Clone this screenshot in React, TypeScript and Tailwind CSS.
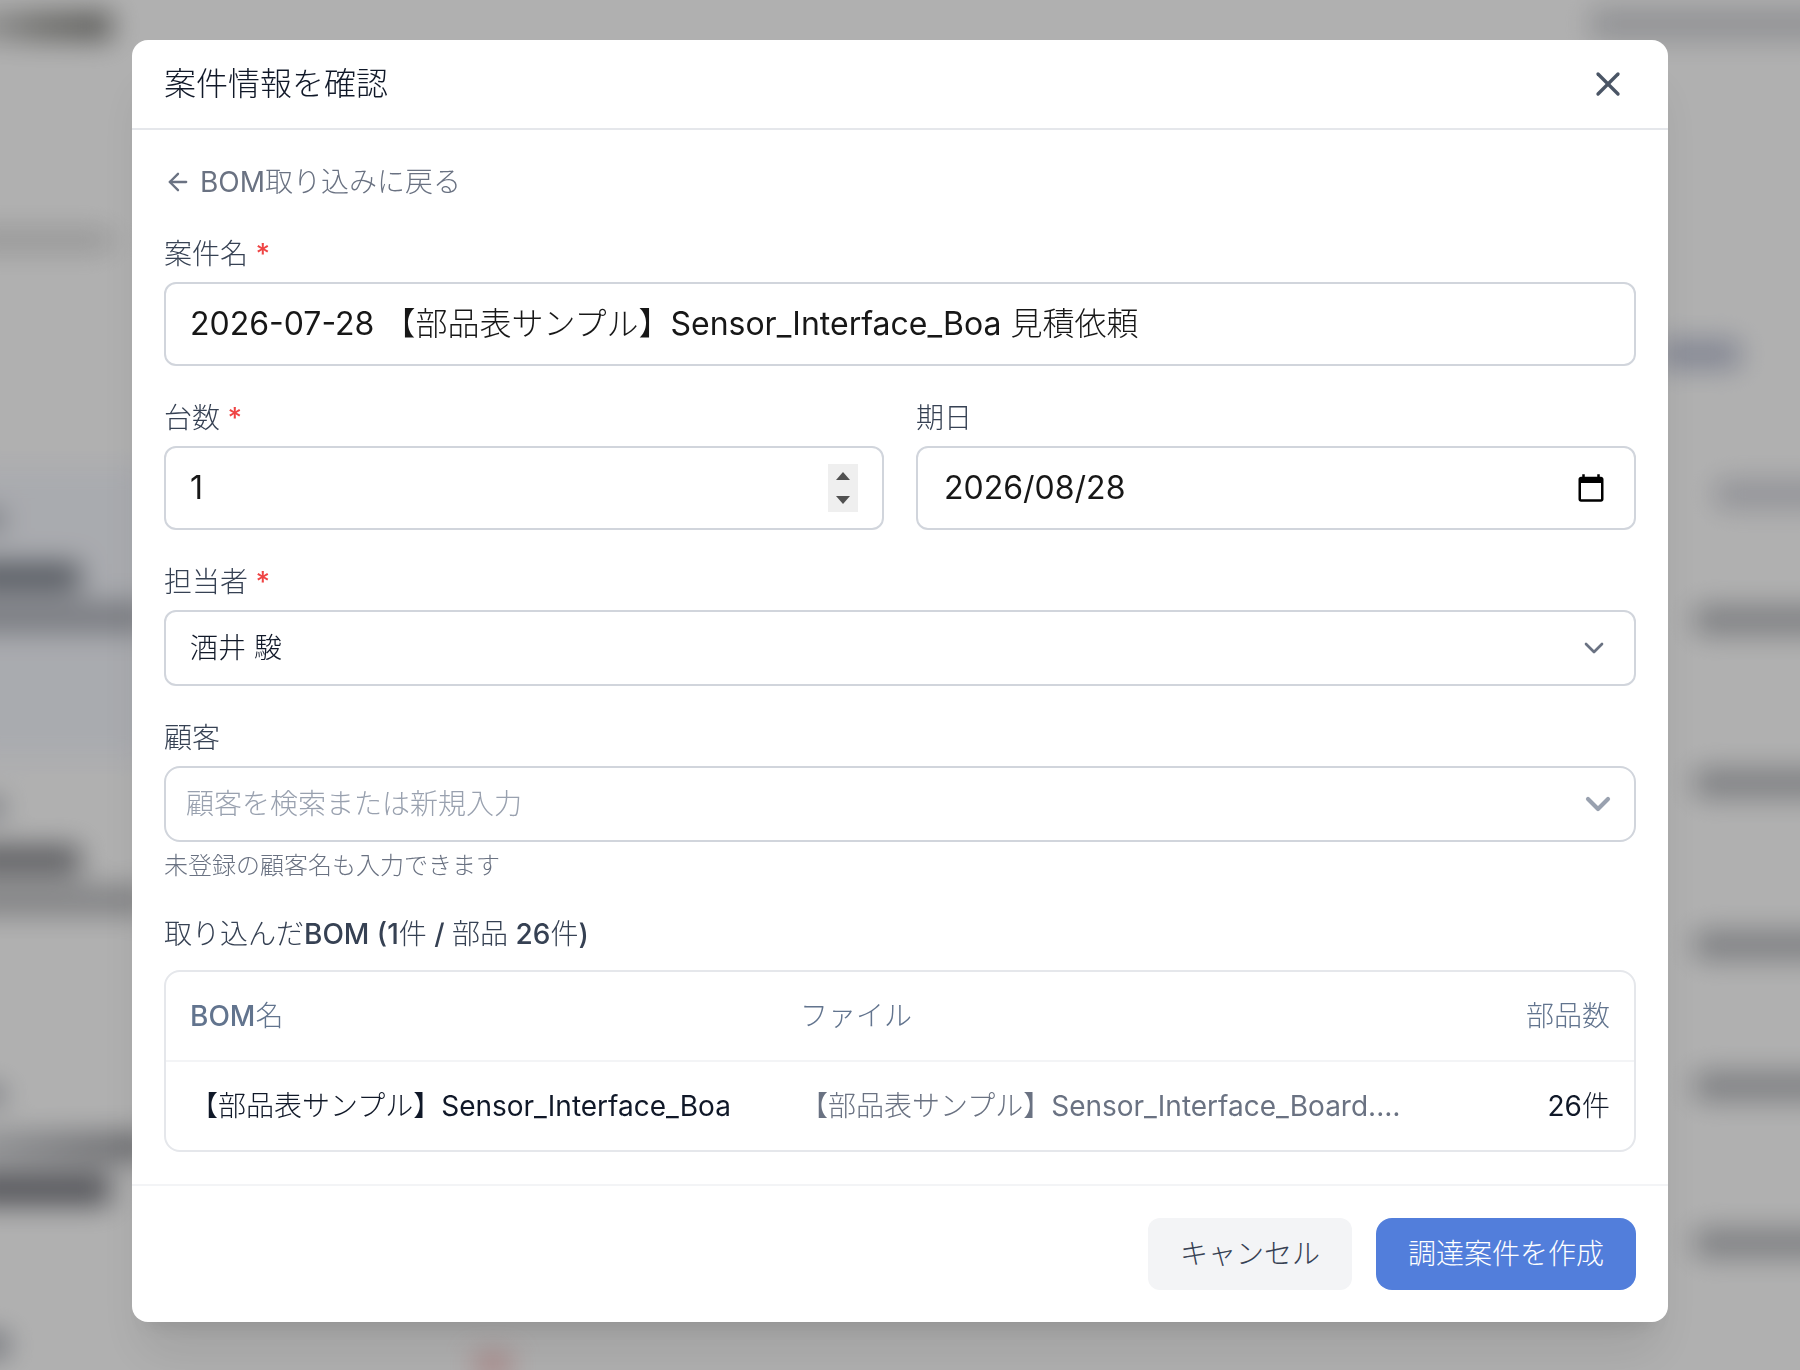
import { useState, type ReactNode } from "react";
import { ArrowLeft, ChevronDown, X } from "lucide-react";

const boms = [
  {
    name: "【部品表サンプル】Sensor_Interface_Boa",
    file: "【部品表サンプル】Sensor_Interface_Board.…",
    parts: 26
  }
];

type FieldLabelProps = {
  htmlFor: string;
  required?: boolean;
  children: ReactNode;
};

function FieldLabel({ htmlFor, required, children }: FieldLabelProps) {
  return (
    <label
      htmlFor={htmlFor}
      className="mb-2 block text-[28px] leading-10 font-medium text-gray-700"
    >
      {children}
      {required && <span className="text-[#ef4444]"> *</span>}
    </label>
  );
}

function CalendarIcon() {
  return (
    <svg width="30" height="30" viewBox="0 0 24 24" fill="black" aria-hidden="true">
      <path d="M20 3h-1V1h-2v2H7V1H5v2H4c-1.1 0-2 .9-2 2v16c0 1.1.9 2 2 2h16c1.1 0 2-.9 2-2V5c0-1.1-.9-2-2-2zm0 18H4V8h16v13z" />
    </svg>
  );
}

// Project list that stays behind the dialog, wider than the window so its blur has no edge
function PageBehind() {
  return (
    <div aria-hidden="true" className="h-screen overflow-hidden bg-[#fdfdfd]">
      <div className="-mx-8 flex h-full justify-between blur-[14px]">
        <div className="w-[182px] shrink-0">
          <div className="h-[465px] pt-3">
            <div className="h-7 w-[144px] bg-gradient-to-r from-[#e0e0e0] via-[#9a9a96] to-[#7c7c78]" />
            <div className="mt-[190px] h-5 w-[144px] bg-[#d2d2d2]" />
          </div>
          <div className="h-[295px] bg-[#f3f5fb] pt-[47px]">
            <div className="h-4 w-9 bg-[#9ca0aa]" />
            <div className="mt-[35px] h-7 w-28 bg-[#767c86]" />
            <div className="mt-3 h-7 bg-[#a8abb3]" />
          </div>
          <div className="h-[295px] pt-10">
            <div className="h-4 w-9 bg-[#9ca0aa]" />
            <div className="mt-[30px] h-7 w-28 bg-[#808186]" />
            <div className="mt-3 h-7 bg-[#b5b6b9]" />
          </div>
          <div className="pt-8">
            <div className="h-4 w-9 bg-[#9ca0aa]" />
            <div className="mt-[30px] h-7 bg-gradient-to-r from-[#d0d2d6] to-[#8c8d92]" />
            <div className="mt-3 h-8 w-[142px] bg-[#75767d]" />
            <div className="mt-[128px] h-6 w-10 bg-[#9ca0aa]" />
          </div>
        </div>
        <div className="flex flex-1 flex-col justify-end pl-[325px]">
          <div className="h-3 w-9 bg-[#f08c8c]" />
        </div>
        <div className="w-[242px] shrink-0">
          <div className="pt-2">
            <div className="h-8 bg-[#d0d1d5]" />
          </div>
          <div className="mt-[300px] ml-[70px] h-7 w-[80px] bg-[#b8bdd0]" />
          <div className="mt-[112px] ml-[125px] h-7 bg-[#d0d1d8]" />
          <div className="mt-[98px] ml-[105px] h-7 bg-[#b2b4b8]" />
          <div className="mt-[135px] ml-[105px] h-7 bg-[#b2b4b8]" />
          <div className="mt-[134px] ml-[105px] h-7 bg-[#b2b4b8]" />
          <div className="mt-[113px] ml-[105px] h-7 bg-[#b2b4b8]" />
          <div className="mt-[129px] ml-[105px] h-7 bg-[#b2b4b8]" />
        </div>
      </div>
    </div>
  );
}

export default function App() {
  const [name, setName] = useState(
    "2026-07-28 【部品表サンプル】Sensor_Interface_Boa 見積依頼"
  );
  const [quantity, setQuantity] = useState(1);
  const [dueDate, setDueDate] = useState("2026/08/28");
  const [customer, setCustomer] = useState("");

  const totalParts = boms.reduce((sum, bom) => sum + bom.parts, 0);

  return (
    <div className="font-['Inter','Noto_Sans_CJK_JP_Light','Noto_Sans_CJK_JP',sans-serif]">
      <PageBehind />

      <div className="fixed inset-0 flex items-start justify-center overflow-hidden bg-black/30 py-10">
        <div
          role="dialog"
          aria-modal="true"
          aria-labelledby="dialog-title"
          className="w-full max-w-[1536px] rounded-2xl bg-white shadow-[0_40px_50px_-10px_rgba(0,0,0,0.1),0_16px_20px_-12px_rgba(0,0,0,0.1)]"
        >
          <div className="flex items-center justify-between border-b-2 border-gray-200 px-8 py-4">
            <h2 id="dialog-title" className="text-[32px] leading-12 font-medium text-gray-900">
              案件情報を確認
            </h2>
            <button type="button" aria-label="閉じる" className="p-2 text-gray-600">
              <X size={40} />
            </button>
          </div>

          <form>
            <div className="space-y-8 p-8">
              <button
                type="button"
                className="flex items-center gap-2 text-[28px] leading-10 text-gray-500"
              >
                <ArrowLeft size={28} />
                BOM取り込みに戻る
              </button>

              <div>
                <FieldLabel htmlFor="name" required>
                  案件名
                </FieldLabel>
                <input
                  id="name"
                  type="text"
                  value={name}
                  onChange={(event) => setName(event.target.value)}
                  className="block w-full rounded-xl border-2 border-gray-300 px-6 py-4 text-[32px] leading-12 text-neutral-900 outline-none"
                />
              </div>

              <div className="grid grid-cols-2 gap-8">
                <div>
                  <FieldLabel htmlFor="quantity" required>
                    台数
                  </FieldLabel>
                  <div className="flex items-center rounded-xl border-2 border-gray-300 px-6 py-4">
                    <input
                      id="quantity"
                      type="number"
                      min={1}
                      value={quantity}
                      onChange={(event) => setQuantity(Number(event.target.value))}
                      className="h-12 min-w-0 flex-1 [appearance:textfield] text-[32px] leading-12 text-neutral-900 outline-none [&::-webkit-inner-spin-button]:appearance-none"
                    />
                    <div className="flex h-12 w-[30px] flex-col bg-[#efefef]">
                      <button
                        type="button"
                        aria-label="増やす"
                        onClick={() => setQuantity(quantity + 1)}
                        className="flex flex-1 items-center justify-center"
                      >
                        <svg width="14" height="8" viewBox="0 0 14 8" fill="#505050">
                          <path d="M7 0l7 8H0z" />
                        </svg>
                      </button>
                      <button
                        type="button"
                        aria-label="減らす"
                        onClick={() => setQuantity(Math.max(1, quantity - 1))}
                        className="flex flex-1 items-center justify-center"
                      >
                        <svg width="14" height="8" viewBox="0 0 14 8" fill="#505050">
                          <path d="M7 8L0 0h14z" />
                        </svg>
                      </button>
                    </div>
                  </div>
                </div>

                <div>
                  <FieldLabel htmlFor="due-date">期日</FieldLabel>
                  <div className="flex items-center rounded-xl border-2 border-gray-300 px-6 py-4">
                    <input
                      id="due-date"
                      type="text"
                      inputMode="numeric"
                      value={dueDate}
                      onChange={(event) => setDueDate(event.target.value)}
                      className="h-12 min-w-0 flex-1 px-0.5 text-[32px] leading-12 text-neutral-900 outline-none"
                    />
                    <button type="button" aria-label="カレンダーを開く" className="px-1">
                      <CalendarIcon />
                    </button>
                  </div>
                </div>
              </div>

              <div>
                <FieldLabel htmlFor="assignee" required>
                  担当者
                </FieldLabel>
                <div className="relative">
                  <select
                    id="assignee"
                    className="block w-full appearance-none rounded-xl border-2 border-gray-300 bg-white px-6 py-4 text-[28px] leading-10 text-gray-900 outline-none"
                  >
                    <option>酒井 駿</option>
                  </select>
                  <ChevronDown
                    size={32}
                    className="pointer-events-none absolute inset-y-0 right-6.5 my-auto text-gray-500"
                  />
                </div>
              </div>

              <div>
                <FieldLabel htmlFor="customer">顧客</FieldLabel>
                <div className="flex items-center rounded-2xl border-2 border-gray-300 py-4 pr-4 pl-5">
                  <input
                    id="customer"
                    type="text"
                    value={customer}
                    onChange={(event) => setCustomer(event.target.value)}
                    placeholder="顧客を検索または新規入力"
                    className="h-10 min-w-0 flex-1 text-[28px] leading-10 text-gray-900 outline-none placeholder:text-gray-400"
                  />
                  <button type="button" aria-label="候補を表示" className="text-gray-400">
                    <ChevronDown size={40} strokeWidth={2.5} />
                  </button>
                </div>
                <p className="mt-2 text-2xl leading-8 text-gray-500">
                  未登録の顧客名も入力できます
                </p>
              </div>

              <div>
                <h3 className="mb-4 text-[28px] leading-10 font-medium text-gray-700">
                  取り込んだBOM ({boms.length}件 / 部品 {totalParts}件)
                </h3>
                <div className="overflow-hidden rounded-2xl border-2 border-gray-200">
                  <table className="w-full text-[28px] leading-10">
                    <thead>
                      <tr className="border-b-2 border-gray-100 text-slate-500">
                        <th className="w-[610px] p-6 text-left font-medium">BOM名</th>
                        <th className="p-6 text-left font-medium">ファイル</th>
                        <th className="p-6 text-right font-medium">部品数</th>
                      </tr>
                    </thead>
                    <tbody>
                      {boms.map((bom) => (
                        <tr key={bom.name}>
                          <td className="p-6 text-gray-900">{bom.name}</td>
                          <td className="p-6 whitespace-nowrap text-gray-500">{bom.file}</td>
                          <td className="p-6 text-right text-gray-900">{bom.parts}件</td>
                        </tr>
                      ))}
                    </tbody>
                  </table>
                </div>
              </div>
            </div>

            <div className="flex justify-end gap-6 border-t-2 border-gray-100 p-8">
              <button
                type="button"
                className="rounded-xl bg-gray-100 px-8 py-4 text-[28px] leading-10 font-medium text-gray-700"
              >
                キャンセル
              </button>
              <button
                type="submit"
                className="rounded-2xl bg-[#527edb] px-8 py-4 text-[28px] leading-10 font-medium text-white"
              >
                調達案件を作成
              </button>
            </div>
          </form>
        </div>
      </div>
    </div>
  );
}
